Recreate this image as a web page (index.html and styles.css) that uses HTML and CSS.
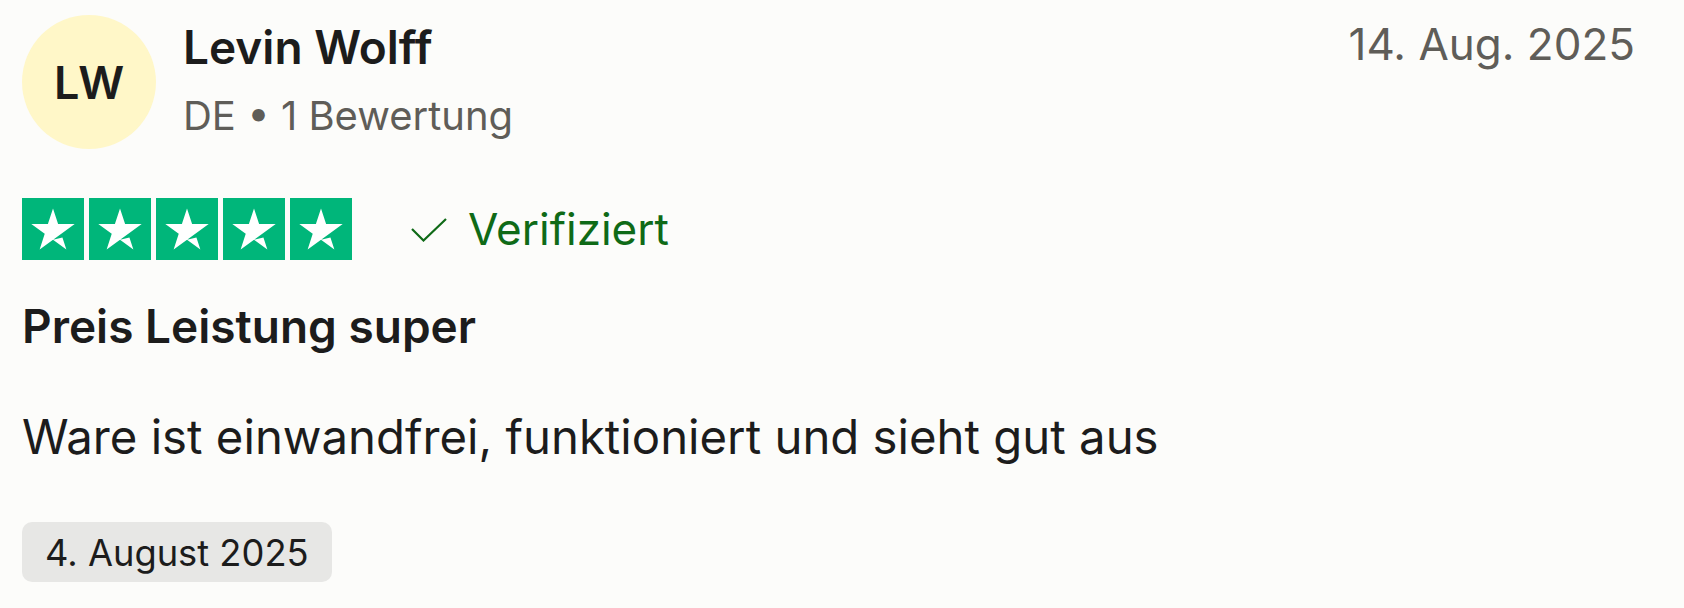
FILE: index.html
```html
<!DOCTYPE html>
<html lang="de">
<head>
<meta charset="utf-8">
<title>Bewertung</title>
<link rel="stylesheet" href="styles.css">
</head>
<body>
<article class="review">
  <header class="head">
    <div class="avatar">LW</div>
    <div class="who">
      <div class="name">Levin Wolff</div>
      <div class="meta">DE • 1 Bewertung</div>
    </div>
    <time class="date">14. Aug. 2025</time>
  </header>
  <div class="rating">
    <div class="stars">
      <svg class="star" viewBox="0 0 96 96"><rect width="96" height="96" fill="#00b67a"/><path fill="#fff" d="M48 64.7 62.6 61l6.1 18.8zM81.6 40.4H55.9L48 16.2l-7.9 24.2H14.4l20.8 15-7.9 24.2 20.8-15 12.8-9.2z"/></svg>
      <svg class="star" viewBox="0 0 96 96"><rect width="96" height="96" fill="#00b67a"/><path fill="#fff" d="M48 64.7 62.6 61l6.1 18.8zM81.6 40.4H55.9L48 16.2l-7.9 24.2H14.4l20.8 15-7.9 24.2 20.8-15 12.8-9.2z"/></svg>
      <svg class="star" viewBox="0 0 96 96"><rect width="96" height="96" fill="#00b67a"/><path fill="#fff" d="M48 64.7 62.6 61l6.1 18.8zM81.6 40.4H55.9L48 16.2l-7.9 24.2H14.4l20.8 15-7.9 24.2 20.8-15 12.8-9.2z"/></svg>
      <svg class="star" viewBox="0 0 96 96"><rect width="96" height="96" fill="#00b67a"/><path fill="#fff" d="M48 64.7 62.6 61l6.1 18.8zM81.6 40.4H55.9L48 16.2l-7.9 24.2H14.4l20.8 15-7.9 24.2 20.8-15 12.8-9.2z"/></svg>
      <svg class="star" viewBox="0 0 96 96"><rect width="96" height="96" fill="#00b67a"/><path fill="#fff" d="M48 64.7 62.6 61l6.1 18.8zM81.6 40.4H55.9L48 16.2l-7.9 24.2H14.4l20.8 15-7.9 24.2 20.8-15 12.8-9.2z"/></svg>
    </div>
    <div class="verified">
      <svg class="check" viewBox="0 0 36 24"><polyline points="1,11 12.5,22.5 35,1" fill="none" stroke="currentColor" stroke-width="2.2"/></svg>
      <span>Verifiziert</span>
    </div>
  </div>
  <h2 class="title">Preis Leistung super</h2>
  <p class="text">Ware ist einwandfrei, funktioniert und sieht gut aus</p>
  <div class="pill">4. August 2025</div>
</article>
</body>
</html>
```
FILE: styles.css
```css
html, body {
  margin: 0;
  padding: 0;
  background: #fcfcfa;
}
body {
  font-family: Inter, "Liberation Sans", sans-serif;
  color: #1c1c1c;
}
.review {
  padding: 15px 49px 0 22px;
}
.head {
  display: flex;
  align-items: flex-start;
}
.avatar {
  width: 134px;
  height: 134px;
  border-radius: 50%;
  background: #fff7c8;
  display: flex;
  align-items: center;
  justify-content: center;
  font-size: 45px;
  font-weight: 600;
  line-height: 1;
  color: #1c1c1c;
  flex: none;
}
.who {
  margin-left: 27px;
  padding-top: 6px;
}
.name {
  font-size: 46px;
  font-weight: 600;
  line-height: 52px;
}
.meta {
  margin-top: 23px;
  font-size: 40px;
  line-height: 40px;
  color: #5f5d58;
}
.date {
  margin-left: auto;
  padding-top: 3px;
  font-size: 44px;
  line-height: 52px;
  color: #5f5d58;
}
.rating {
  margin-top: 49px;
  height: 62px;
  display: flex;
  align-items: center;
}
.stars {
  display: flex;
  gap: 5px;
}
.star {
  width: 62px;
  height: 62px;
  display: block;
}
.verified {
  margin-left: 59px;
  display: flex;
  align-items: center;
  color: #0f6a17;
}
.check {
  width: 36px;
  height: 24px;
  display: block;
  margin-top: 2px;
}
.verified span {
  margin-left: 21px;
  font-size: 44px;
  line-height: 58px;
}
.title {
  margin: 38px 0 0;
  font-size: 46px;
  font-weight: 600;
  line-height: 56px;
}
.text {
  margin: 55px 0 0;
  font-size: 47.3px;
  font-weight: 400;
  line-height: 56px;
}
.pill {
  margin-top: 57px;
  width: fit-content;
  height: 60px;
  box-sizing: border-box;
  padding: 8px 23px 0;
  border-radius: 10px;
  background: #e7e7e5;
  font-size: 36.3px;
  line-height: 46px;
}
```
